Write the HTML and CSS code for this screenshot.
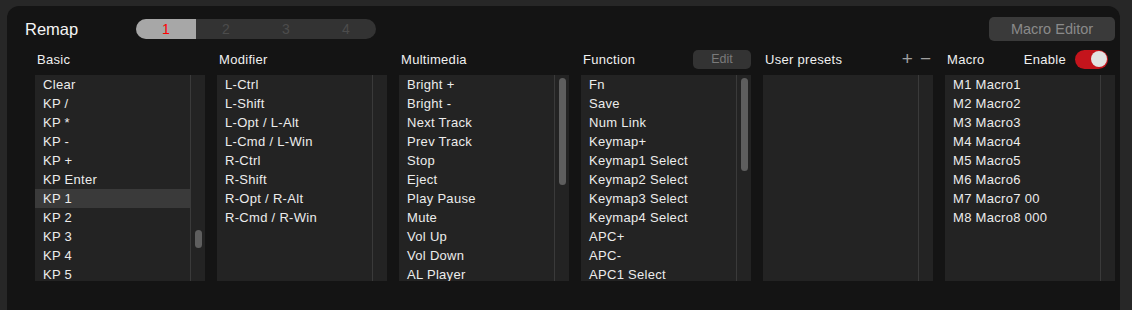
FILE: index.html
```html
<!DOCTYPE html>
<html lang="en">
<head>
    <meta charset="UTF-8">
    <meta name="viewport" content="width=device-width, initial-scale=1.0">
    <title>Remap</title>
    <link rel="stylesheet" href="styles.css">
</head>
<body>
    <div class="window">
        <div class="top-bar">
            <div class="title">Remap</div>
            <div class="layers">
                <div class="layer active">1</div>
                <div class="layer">2</div>
                <div class="layer">3</div>
                <div class="layer">4</div>
            </div>
            <button class="macro-editor">Macro Editor</button>
        </div>

        <div class="columns">
            <!-- Basic -->
            <div class="column">
                <div class="column-head">
                    <span class="column-title">Basic</span>
                </div>
                <div class="list">
                    <div class="items">
                        <div class="item">Clear</div>
                        <div class="item">KP /</div>
                        <div class="item">KP *</div>
                        <div class="item">KP -</div>
                        <div class="item">KP +</div>
                        <div class="item">KP Enter</div>
                        <div class="item selected">KP 1</div>
                        <div class="item">KP 2</div>
                        <div class="item">KP 3</div>
                        <div class="item">KP 4</div>
                        <div class="item">KP 5</div>
                    </div>
                    <div class="track">
                        <div class="thumb" style="margin-top: 155px; height: 18px;"></div>
                    </div>
                </div>
            </div>

            <!-- Modifier -->
            <div class="column">
                <div class="column-head">
                    <span class="column-title">Modifier</span>
                </div>
                <div class="list">
                    <div class="items">
                        <div class="item">L-Ctrl</div>
                        <div class="item">L-Shift</div>
                        <div class="item">L-Opt / L-Alt</div>
                        <div class="item">L-Cmd / L-Win</div>
                        <div class="item">R-Ctrl</div>
                        <div class="item">R-Shift</div>
                        <div class="item">R-Opt / R-Alt</div>
                        <div class="item">R-Cmd / R-Win</div>
                    </div>
                    <div class="track"></div>
                </div>
            </div>

            <!-- Multimedia -->
            <div class="column">
                <div class="column-head">
                    <span class="column-title">Multimedia</span>
                </div>
                <div class="list">
                    <div class="items">
                        <div class="item">Bright +</div>
                        <div class="item">Bright -</div>
                        <div class="item">Next Track</div>
                        <div class="item">Prev Track</div>
                        <div class="item">Stop</div>
                        <div class="item">Eject</div>
                        <div class="item">Play Pause</div>
                        <div class="item">Mute</div>
                        <div class="item">Vol Up</div>
                        <div class="item">Vol Down</div>
                        <div class="item">AL Player</div>
                    </div>
                    <div class="track">
                        <div class="thumb" style="margin-top: 3px; height: 107px;"></div>
                    </div>
                </div>
            </div>

            <!-- Function -->
            <div class="column">
                <div class="column-head">
                    <span class="column-title">Function</span>
                    <button class="edit">Edit</button>
                </div>
                <div class="list">
                    <div class="items">
                        <div class="item">Fn</div>
                        <div class="item">Save</div>
                        <div class="item">Num Link</div>
                        <div class="item">Keymap+</div>
                        <div class="item">Keymap1 Select</div>
                        <div class="item">Keymap2 Select</div>
                        <div class="item">Keymap3 Select</div>
                        <div class="item">Keymap4 Select</div>
                        <div class="item">APC+</div>
                        <div class="item">APC-</div>
                        <div class="item">APC1 Select</div>
                    </div>
                    <div class="track">
                        <div class="thumb" style="margin-top: 3px; height: 93px;"></div>
                    </div>
                </div>
            </div>

            <!-- User presets -->
            <div class="column">
                <div class="column-head">
                    <span class="column-title">User presets</span>
                    <div class="preset-tools">
                        <span class="tool">+</span>
                        <span class="tool">&minus;</span>
                    </div>
                </div>
                <div class="list">
                    <div class="items"></div>
                    <div class="track"></div>
                </div>
            </div>

            <!-- Macro -->
            <div class="column">
                <div class="column-head">
                    <span class="column-title">Macro</span>
                    <div class="enable">
                        <span>Enable</span>
                        <div class="switch on"><div class="knob"></div></div>
                    </div>
                </div>
                <div class="list">
                    <div class="items">
                        <div class="item">M1 Macro1</div>
                        <div class="item">M2 Macro2</div>
                        <div class="item">M3 Macro3</div>
                        <div class="item">M4 Macro4</div>
                        <div class="item">M5 Macro5</div>
                        <div class="item">M6 Macro6</div>
                        <div class="item">M7 Macro7 00</div>
                        <div class="item">M8 Macro8 000</div>
                    </div>
                    <div class="track"></div>
                </div>
            </div>
        </div>
    </div>
</body>
</html>
```

FILE: styles.css
```css
body {
    font-family: 'Liberation Sans', Arial, sans-serif;
    background-color: #272727;
    margin: 0;
    padding: 0;
    height: 310px;
    overflow: hidden;
}
.window {
    margin: 6px 12px 0 7px;
    height: 304px;
    background-color: #141414;
    border-radius: 12px 12px 0 0;
    box-sizing: border-box;
    padding: 11px 5px 0 18px;
}
.top-bar {
    display: flex;
    align-items: center;
    height: 24px;
}
.title {
    color: #f4f4f4;
    font-size: 16.5px;
    width: 111px;
}
.layers {
    display: flex;
    width: 240px;
    height: 20px;
    border-radius: 10px;
    background-color: #333;
    overflow: hidden;
}
.layer {
    flex: 1;
    display: flex;
    align-items: center;
    justify-content: center;
    font-size: 14px;
    color: #4c4c4c;
}
.layer.active {
    background-color: #a7a7a7;
    color: #ff0000;
}
button {
    font-family: inherit;
    border: none;
    cursor: pointer;
}
.macro-editor {
    margin-left: auto;
    width: 126px;
    height: 24px;
    border-radius: 5px;
    background-color: #3a3a3a;
    color: #8a8a8a;
    font-size: 14.5px;
}
.columns {
    display: flex;
    gap: 12px;
    margin-top: 8px;
    padding-left: 10px;
}
.column {
    width: 170px;
    display: flex;
    flex-direction: column;
}
.column-head {
    display: flex;
    align-items: center;
    height: 20px;
    margin-bottom: 6px;
    padding-left: 2px;
}
.column-title {
    color: #f0f0f0;
    font-size: 13px;
    letter-spacing: 0.3px;
}
.edit {
    margin-left: auto;
    width: 58px;
    height: 19px;
    border-radius: 5px;
    background-color: #333;
    color: #7a7a7a;
    font-size: 12.5px;
}
.preset-tools {
    margin-left: auto;
    margin-right: 2px;
    display: flex;
    gap: 7px;
    color: #a0a0a0;
    font-size: 19px;
}
.enable {
    margin-left: auto;
    margin-right: 7px;
    display: flex;
    align-items: center;
    gap: 9px;
    color: #f0f0f0;
    font-size: 13px;
    letter-spacing: 0.3px;
}
.switch {
    width: 33px;
    height: 19px;
    border-radius: 10px;
    background-color: #3a3a3a;
    display: flex;
    align-items: center;
    padding: 0 1px;
    box-sizing: border-box;
}
.switch.on {
    background-color: #c4141c;
    justify-content: flex-end;
}
.knob {
    width: 16px;
    height: 16px;
    border-radius: 50%;
    background-color: #e2e2e2;
}
.list {
    display: flex;
    height: 206px;
    background-color: #232323;
}
.items {
    flex: 1;
    border-right: 1px solid #3a3a3a;
    overflow: hidden;
}
.item {
    height: 19px;
    line-height: 19px;
    padding-left: 8px;
    color: #ececec;
    font-size: 13px;
    letter-spacing: 0.3px;
    white-space: nowrap;
}
.item.selected {
    background-color: #3a3a3a;
}
.track {
    width: 14px;
    display: flex;
    flex-direction: column;
    align-items: center;
}
.thumb {
    width: 7px;
    border-radius: 4px;
    background-color: #5e5e5e;
}
```
